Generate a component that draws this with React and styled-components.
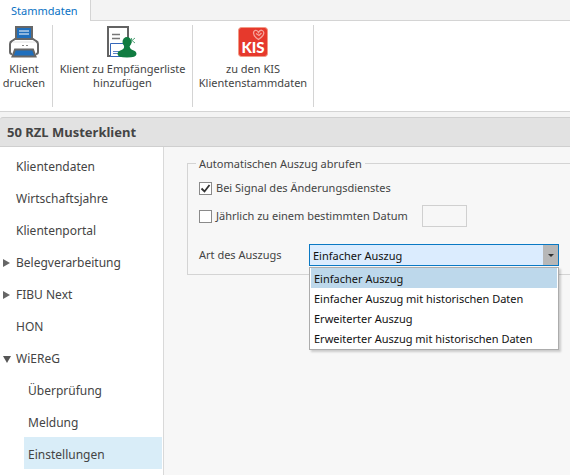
import React, { useState } from "react";
import styled, { createGlobalStyle } from "styled-components";

const GlobalStyle = createGlobalStyle`
  *, *::before, *::after { box-sizing: border-box; }
  body {
    margin: 0;
    background: #f3f3f3;
    color: #444;
    font: 11px/16px "Noto Sans", "Open Sans", sans-serif;
  }
  button, select, input { font: inherit; color: inherit; }
`;

const Window = styled.div`
  min-height: 100vh;
  display: flex;
  flex-direction: column;
  overflow: hidden;
`;

const TabStrip = styled.div`
  display: flex;
  height: 21px;
  border-bottom: 1px solid #d4d4d4;
`;

const Tab = styled.button`
  height: 21px;
  padding: 2px 12px 2px 11px;
  border: 0;
  border-right: 1px solid #d4d4d4;
  background: #fff;
  color: #0a72c4;
`;

const Ribbon = styled.div`
  display: flex;
  padding: 4px 0;
  background: #fff;
  border-bottom: 1px solid #d4d4d4;
`;

const RibbonGroup = styled.div`
  display: flex;
  justify-content: center;
  width: ${(p) => p.$width}px;
  height: 82px;
  border-right: 1px solid #d4d4d4;

  &:first-child {
    padding-right: 4px;
  }
`;

const RibbonButton = styled.button`
  display: flex;
  flex-direction: column;
  align-items: center;
  padding: 0;
  border: 0;
  background: transparent;
  line-height: 14px;
  white-space: nowrap;

  svg {
    margin-bottom: 5px;
    overflow: visible;
  }
`;

const TitleBar = styled.h1`
  margin: 5px 0 0;
  padding: 5px 7px 4px;
  border: 1px solid #cfcfcf;
  border-width: 1px 0;
  border-top-left-radius: 3px;
  background: #e2e2e2;
  font-size: 13px;
  line-height: 19px;
  font-weight: 700;
`;

const Body = styled.div`
  flex: 1;
  display: flex;
`;

const Sidebar = styled.nav`
  width: 164px;
  flex: none;
  padding: 2px 1px 6px 0;
  border-right: 1px solid #d9d9d9;
  background: #fff;
  font-size: 12px;
`;

const NavList = styled.ul`
  margin: 0;
  padding: 0;
  list-style: none;
`;

const NavLink = styled.a`
  display: flex;
  align-items: center;
  height: 32px;
  margin-left: ${(p) => (p.$nested ? 24 : 0)}px;
  padding-left: ${(p) => (p.$nested ? 4 : 3)}px;
  padding-top: 4px;
  background: ${(p) => (p.$active ? "#d9edf8" : "transparent")};
  color: inherit;
  text-decoration: none;
`;

const ArrowSlot = styled.span`
  display: flex;
  width: 13px;
`;

const Content = styled.main`
  flex: 1;
  min-width: 0;
  padding: 7px 0 24px 23px;
  background: #f7f7f7;
`;

const Group = styled.fieldset`
  margin: 0;
  padding: 2px 11px 8px;
  min-width: 0;
  border: 1px solid #d4d4d4;
  border-right: 0;
`;

const Legend = styled.legend`
  margin-left: -3px;
  padding: 2px 3px 0;
`;

const CheckRow = styled.div`
  display: flex;
  align-items: center;
  height: 28px;
`;

const CheckLabel = styled.label`
  display: flex;
  align-items: center;
  gap: 4px;
`;

const CheckBox = styled.input`
  appearance: none;
  flex: none;
  width: 13px;
  height: 13px;
  margin: 0;
  border: 1px solid #8a8a8a;
  background: #fff;

  & + svg {
    margin-left: -17px;
    pointer-events: none;
    visibility: hidden;
  }

  &:checked + svg {
    visibility: visible;
  }
`;

const DateInput = styled.input`
  width: 45px;
  height: 22px;
  margin-left: 14px;
  padding: 0 4px;
  border: 1px solid #d0d0d0;
  background: transparent;
`;

const SelectRow = styled.div`
  display: flex;
  align-items: center;
  margin-top: 14px;
`;

const SelectLabel = styled.label`
  width: 110px;
`;

const ComboBox = styled.div`
  position: relative;
  width: 250px;
`;

const Select = styled.select`
  appearance: none;
  display: block;
  width: 100%;
  height: 22px;
  padding: 1px 20px 0 3px;
  border: 1px solid #0a79c4;
  outline: 0;
  border-radius: 0;
  background: #dbecfe;
  color: #111;
`;

const SelectArrow = styled.span`
  position: absolute;
  top: 1px;
  right: 1px;
  bottom: 1px;
  width: 15px;
  display: flex;
  align-items: center;
  justify-content: center;
  background: #b7b7b7;
  pointer-events: none;
`;

const OptionList = styled.ul`
  position: absolute;
  top: 100%;
  left: 0;
  right: 0;
  margin: 1px 0 0;
  padding: 0 1px 1px;
  list-style: none;
  border: 1px solid #acacac;
  background: #fff;
  box-shadow: 2px 2px 2px rgba(0, 0, 0, 0.18);
`;

const Option = styled.li`
  height: 20px;
  padding: 3px 3px 1px;
  background: ${(p) => (p.$active ? "#bdd8eb" : "transparent")};
  color: #111;
  white-space: nowrap;
  cursor: default;
`;

const PrinterIcon = () => (
  <svg width="32" height="32" viewBox="0 0 32 32" aria-hidden="true">
    <path d="M8 14V2h16v12z" fill="#1f6fbd" stroke="#676767" strokeWidth="2" />
    <path d="M11 6h10M11 9h10" stroke="#fff" strokeWidth="1" />
    <path d="M4 29q-2 0-2-2v-8q0-2 2-3l3-2h18l3 2q2 1 2 3v8q0 2-2 2" fill="#fff" stroke="#676767" strokeWidth="2" />
    <path d="M5 17h22" stroke="#e4e4e4" />
    <path d="M14 20.500h2M18 20.500h2" stroke="#888" />
    <path d="M7 24.500h18l2.500 7h-23z" fill="#1f6fbd" stroke="#676767" strokeWidth="2" />
  </svg>
);

const RecipientIcon = () => (
  <svg width="32" height="32" viewBox="0 0 32 32" aria-hidden="true">
    <path d="M2 31V2h20v29z" fill="#fff" stroke="#636363" strokeWidth="2" />
    <path d="M6 9.500h8M6 13.500h8" stroke="#777" strokeWidth="1.500" />
    <path d="M4.500 18.500h14v13h-14z" fill="#fff" stroke="#3567ba" />
    <path d="M7 26.500h6M7 28.500h6" stroke="#5c82c6" />
    <ellipse cx="21" cy="17" rx="4.500" ry="5" fill="#107c41" />
    <path d="M18.500 20h5q0 4 3 5 4 1 4 4 0 3.500-9.500 3.500t-9.500-3.500q0-3 4-4 3-1 3-5z" fill="#107c41" />
    <path d="M25.500 13v5M29 13l-3 2.500 3 2.500" fill="none" stroke="#55a47a" />
  </svg>
);

const KisIcon = () => (
  <svg width="32" height="32" viewBox="0 0 32 32" aria-hidden="true">
    <rect x="1.500" y="2.500" width="29" height="29" rx="3" fill="#e6392c" stroke="#f29a85" />
    <path d="M21.500 14.500c-3-2-5-4.500-5-6.500s1.700-3 3-2.500 1.500 1 2 2c.7-1.500 2-2.700 3.700-2 1.800.7 2 3 .8 4.800-1 1.500-2.500 2.700-4.500 4.200zM19 8.500l3 2 2.500-2.500" fill="none" stroke="#f5a49b" strokeWidth="1.300" />
    <text x="16" y="28" textAnchor="middle" fontFamily="Lato, sans-serif" fontWeight="900" fontSize="15" fill="#fff">KIS</text>
  </svg>
);

const RightArrow = () => (
  <svg width="7" height="8" viewBox="0 0 7 8" aria-hidden="true">
    <path d="M0 0l7 4-7 4z" fill="#666" />
  </svg>
);

const DownArrow = () => (
  <svg width="8" height="7" viewBox="0 0 8 7" aria-hidden="true">
    <path d="M0 0h8L4 7z" fill="#555" />
  </svg>
);

const CheckMark = () => (
  <svg width="13" height="13" viewBox="0 0 13 13" aria-hidden="true">
    <path d="M2.500 6.500l3 3 5-6.500" fill="none" stroke="#333" strokeWidth="1.800" />
  </svg>
);

const navItems = [
  { label: "Klientendaten" },
  { label: "Wirtschaftsjahre" },
  { label: "Klientenportal" },
  { label: "Belegverarbeitung", arrow: "right" },
  { label: "FIBU Next", arrow: "right" },
  { label: "HON" },
  { label: "WiEReG", arrow: "down" },
  { label: "Überprüfung", nested: true },
  { label: "Meldung", nested: true },
  { label: "Einstellungen", nested: true, active: true },
];

const extractTypes = [
  "Einfacher Auszug",
  "Einfacher Auszug mit historischen Daten",
  "Erweiterter Auszug",
  "Erweiterter Auszug mit historischen Daten",
];

const ribbonItems = [
  { Icon: PrinterIcon, lines: ["Klient", "drucken"], width: 53 },
  { Icon: RecipientIcon, lines: ["Klient zu Empfängerliste", "hinzufügen"], width: 140 },
  { Icon: KisIcon, lines: ["zu den KIS", "Klientenstammdaten"], width: 121 },
];

export default function App() {
  const [extract, setExtract] = useState(extractTypes[0]);

  return (
    <Window>
      <GlobalStyle />
      <TabStrip>
        <Tab type="button">Stammdaten</Tab>
      </TabStrip>
      <Ribbon>
        {ribbonItems.map(({ Icon, lines, width }) => (
          <RibbonGroup key={lines[0]} $width={width}>
            <RibbonButton type="button">
              <Icon />
              {lines.map((line) => (
                <span key={line}>{line}</span>
              ))}
            </RibbonButton>
          </RibbonGroup>
        ))}
      </Ribbon>
      <TitleBar>50 RZL Musterklient</TitleBar>
      <Body>
        <Sidebar>
          <NavList>
            {navItems.map(({ label, arrow, nested, active }) => (
              <li key={label}>
                <NavLink href="#" $nested={nested} $active={active} aria-current={active ? "page" : undefined}>
                  {!nested && (
                    <ArrowSlot>
                      {arrow === "right" && <RightArrow />}
                      {arrow === "down" && <DownArrow />}
                    </ArrowSlot>
                  )}
                  {label}
                </NavLink>
              </li>
            ))}
          </NavList>
        </Sidebar>
        <Content>
          <Group>
            <Legend>Automatischen Auszug abrufen</Legend>
            <CheckRow>
              <CheckLabel>
                <CheckBox type="checkbox" defaultChecked />
                <CheckMark />
                Bei Signal des Änderungsdienstes
              </CheckLabel>
            </CheckRow>
            <CheckRow>
              <CheckLabel>
                <CheckBox type="checkbox" />
                <CheckMark />
                Jährlich zu einem bestimmten Datum
              </CheckLabel>
              <DateInput type="text" aria-label="Datum" />
            </CheckRow>
            <SelectRow>
              <SelectLabel htmlFor="extract">Art des Auszugs</SelectLabel>
              <ComboBox>
                <Select id="extract" value={extract} onChange={(e) => setExtract(e.target.value)}>
                  {extractTypes.map((type) => (
                    <option key={type}>{type}</option>
                  ))}
                </Select>
                <SelectArrow>
                  <svg width="6" height="3" viewBox="0 0 6 3" aria-hidden="true">
                    <path d="M0 0h6L3 3z" fill="#333" />
                  </svg>
                </SelectArrow>
                <OptionList role="listbox" aria-label="Art des Auszugs">
                  {extractTypes.map((type) => (
                    <Option
                      key={type}
                      role="option"
                      aria-selected={type === extract}
                      $active={type === extract}
                      onClick={() => setExtract(type)}
                    >
                      {type}
                    </Option>
                  ))}
                </OptionList>
              </ComboBox>
            </SelectRow>
          </Group>
        </Content>
      </Body>
    </Window>
  );
}
